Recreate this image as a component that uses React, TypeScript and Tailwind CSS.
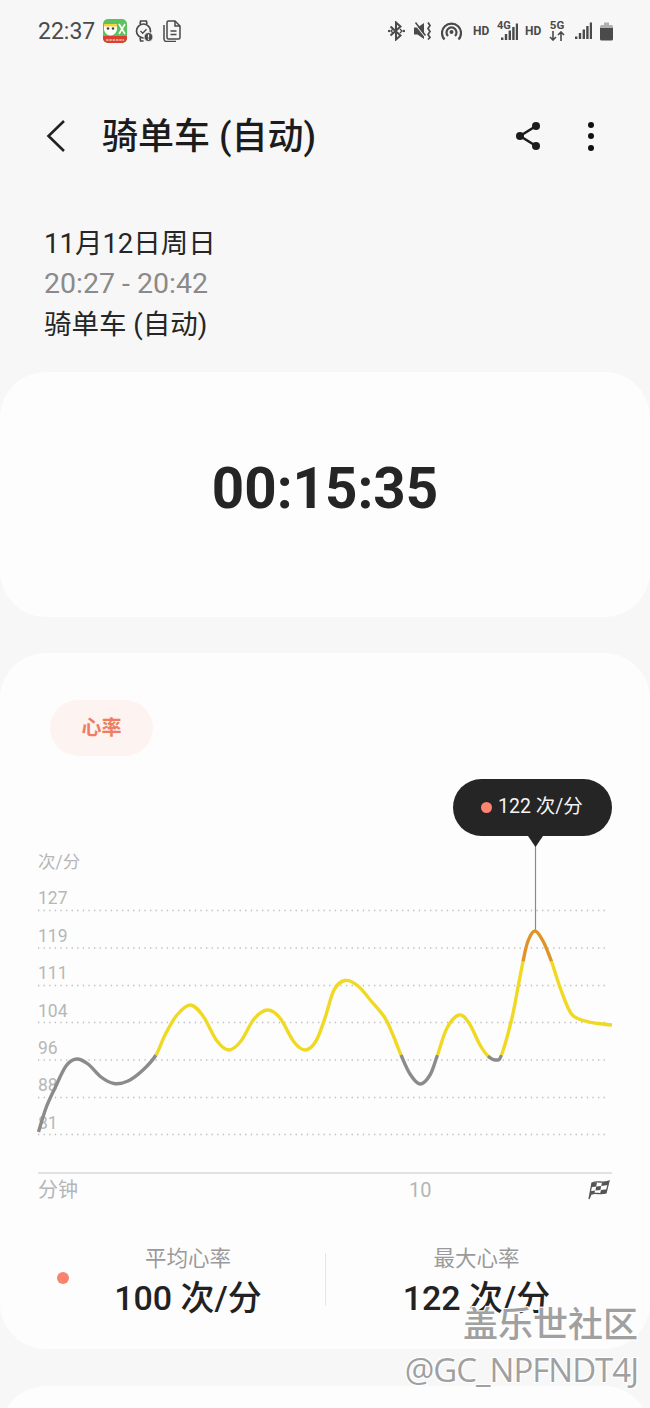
import React from "react";

type P = [number, number];
const pts: P[] = [
  [38.5, 1132], [46, 1108], [55, 1088], [66, 1066], [76.5, 1059], [88, 1064], [101, 1077], [114, 1083.5], [128, 1081], [143, 1070], [156, 1055],
  [165, 1035], [177, 1015], [190.5, 1005], [203, 1016], [217, 1041], [229, 1050], [241, 1041], [254, 1019], [267.5, 1010], [280, 1018], [294, 1042], [305.5, 1050], [316, 1041], [325, 1018],
  [334, 990], [345, 980.5], [358, 986], [372, 1002], [385, 1018], [393, 1035], [401, 1055], [410, 1074], [420, 1084], [430, 1075], [437.5, 1055],
  [447, 1028], [459, 1015], [469, 1023], [480, 1045], [488, 1056], [496, 1060], [501.5, 1055], [511.5, 1020], [517.5, 990], [523, 961.5],
  [528, 941], [535, 931], [543, 941], [551.5, 961.5], [561, 990], [571.5, 1014], [585, 1021], [598, 1023.5], [612, 1025],
];
const catmull = (from: number, to: number) => {
  let d = `M${pts[from][0]} ${pts[from][1]}`;
  for (let i = from; i < to; i++) {
    const p0 = pts[Math.max(i - 1, 0)], p1 = pts[i], p2 = pts[i + 1], p3 = pts[Math.min(i + 2, pts.length - 1)];
    d += ` C${p1[0] + (p2[0] - p0[0]) / 6} ${p1[1] + (p2[1] - p0[1]) / 6} ${p2[0] - (p3[0] - p1[0]) / 6} ${p2[1] - (p3[1] - p1[1]) / 6} ${p2[0]} ${p2[1]}`;
  }
  return d;
};
const segs: [number, number, string][] = [
  [0, 10, "#8b8b8b"], [10, 31, "#f0d922"], [31, 35, "#8b8b8b"], [35, 40, "#f0d922"], [40, 42, "#8b8b8b"], [42, 45, "#f0d922"], [45, 49, "#df9429"], [49, 54, "#f0d922"],
];
const gridY = [910.5, 948, 985.5, 1022.5, 1060, 1097.5, 1134.5];
const labels = ["127", "119", "111", "104", "96", "88", "81"];

const Signal = ({ w = 17 }: { w?: number }) => (
  <svg width={w} height="18" viewBox="0 0 17 18" fill="#4a4a4a">
    <rect x="0" y="14.5" width="2.4" height="2.5" /><rect x="3.800" y="11" width="2.400" height="6" /><rect x="7.600" y="7.500" width="2.400" height="9.500" /><rect x="11.200" y="4" width="2.400" height="13" /><rect x="14.800" y="0.500" width="2.200" height="16.500" />
  </svg>
);

export default function App() {
  return (
    <div className="h-[1408px] w-[650px] overflow-hidden bg-[#f7f7f7] relative font-['Roboto','Noto_Sans_CJK_SC',sans-serif]">
      {/* status bar */}
      <div className="h-[62px] pl-[38px] pr-[37px] flex items-center justify-between">
        <div className="flex items-center">
          <span className="text-[23px] leading-none mt-[1px] text-[#4a4a4a] w-[57px]">22:37</span>
          <svg className="ml-[8px]" width="24" height="24" viewBox="0 0 24 24">
            <rect width="24" height="24" rx="5" fill="#5cc25d" />
            <path d="M0 17h24v2a5 5 0 0 1-5 5H5a5 5 0 0 1-5-5z" fill="#d9402f" />
            <path d="M1 5h13v5a6.500 6.500 0 0 1-13 0z" fill="#fff" />
            <path d="M1 5h13v2.500H1z" fill="#f5d33f" />
            <circle cx="5" cy="9.500" r="1.300" fill="#444" /><circle cx="10" cy="9.500" r="1.300" fill="#444" />
            <path d="M16 5l6 10M22 5l-6 10" stroke="#fff" strokeWidth="1.600" />
            <path d="M3 21h18" stroke="#fff" strokeWidth="1.200" strokeDasharray="2.500 0.800" />
          </svg>
          <svg className="ml-[8px]" width="18" height="24" viewBox="0 0 18 24" fill="none" stroke="#4a4a4a">
            <path d="M5 5l.6-3h5.800l.6 3M5 19l.6 3h3" strokeWidth="1.600" />
            <circle cx="8.500" cy="12" r="7" strokeWidth="1.700" />
            <path d="M5.500 12l2.200 2.200 3.800-4" strokeWidth="1.300" />
            <circle cx="13.500" cy="18" r="4.500" fill="#4a4a4a" stroke="#f7f7f7" />
            <path d="M13.500 15.500v3M13.500 19.500v1.200" stroke="#fff" strokeWidth="1.200" />
          </svg>
          <svg className="ml-[10px]" width="18" height="22" viewBox="0 0 18 22" fill="none" stroke="#4a4a4a" strokeWidth="1.500">
            <path d="M4 2.500A1.500 1.500 0 0 1 5.500 1H12l5 5v11.500a1.500 1.500 0 0 1-1.500 1.500h-10A1.500 1.500 0 0 1 4 17.500z" />
            <path d="M1 5v14a2.500 2.500 0 0 0 2.500 2.500H13" />
            <path d="M12 1v5h5M7.500 11h6M7.500 14.500h6" />
          </svg>
        </div>
        <div className="flex items-center text-[#4a4a4a]">
          <svg width="17" height="20" viewBox="0 0 17 20" fill="none" stroke="#4a4a4a" strokeWidth="2">
            <path d="M2.500 5.500l10 9-4.500 4V1.500l4.500 4-10 9" />
            <circle cx="1" cy="10" r="1.200" fill="#4a4a4a" stroke="none" /><circle cx="16" cy="10" r="1.200" fill="#4a4a4a" stroke="none" />
            <path d="M12 8l2 2-2 2M5 8l-2 2 2 2" strokeWidth="1.400" />
          </svg>
          <svg className="ml-[9px]" width="18" height="20" viewBox="0 0 18 20" fill="#4a4a4a">
            <path d="M0 6.500h3.500L10 2v16l-6.500-4.500H0z" />
            <path d="M0.500 2.500l11 14" stroke="#f7f7f7" strokeWidth="1.200" />
            <path d="M1.500 1.500l10 13" stroke="#4a4a4a" strokeWidth="1.500" />
            <path d="M14 1.500l2 3-2 3 2 3-2 3 2 3-2 2" stroke="#4a4a4a" fill="none" strokeWidth="1.700" />
          </svg>
          <svg className="ml-[9px]" width="21" height="20" viewBox="0 0 21 20" fill="none" stroke="#4a4a4a" strokeWidth="2.200">
            <path d="M3.500 18.500a9.500 9.500 0 1 1 14 0" />
            <path d="M7 15a5 5 0 1 1 7 0" />
            <circle cx="10.500" cy="11" r="2" fill="#4a4a4a" stroke="none" />
          </svg>
          <span className="ml-[11px] w-[15px] text-[12px] font-bold leading-none whitespace-nowrap">HD</span>
          <div className="ml-[9px] w-[21px] h-[20px] relative">
            <span className="absolute left-0 -top-[1px] text-[11px] font-bold leading-none">4G</span>
            <div className="absolute right-0 bottom-0"><Signal w={17} /></div>
          </div>
          <span className="ml-[7px] w-[15px] text-[12px] font-bold leading-none whitespace-nowrap">HD</span>
          <div className="ml-[9px] w-[16px] h-[22px] flex flex-col items-center">
            <span className="text-[11.500px] font-bold leading-[11px]">5G</span>
            <svg width="16" height="10" viewBox="0 0 16 10" fill="none" stroke="#4a4a4a" strokeWidth="1.600">
              <path d="M4 0v9M1 6l3 3 3-3M12 10V1M9 4l3-3 3 3" />
            </svg>
          </div>
          <div className="ml-[10px]"><Signal /></div>
          <svg className="ml-[8px]" width="13" height="20" viewBox="0 0 13 20">
            <path d="M4 1.500h5V4h2.500a1.500 1.500 0 0 1 1.500 1.500V7H0V5.500A1.500 1.500 0 0 1 1.500 4H4z" fill="#b0b0b0" />
            <path d="M0 7h13v11a1.500 1.500 0 0 1-1.500 1.500h-10A1.500 1.500 0 0 1 0 18z" fill="#4a4a4a" />
          </svg>
        </div>
      </div>

      {/* header */}
      <div className="h-[148px] flex items-center">
        <svg className="ml-[46px]" width="20" height="34" viewBox="0 0 20 34" fill="none" stroke="#222" strokeWidth="2.600">
          <path d="M18 2L2.500 17 18 32" />
        </svg>
        <span className="ml-[36px] mt-[1px] text-[36px] leading-none font-medium text-[#1c1c1c] whitespace-nowrap">骑单车 (自动)</span>
        <svg className="ml-auto -mr-[1px]" width="28" height="30" viewBox="0 0 28 30" fill="#1c1c1c" stroke="#1c1c1c">
          <path d="M6 15L22 5M6 15l16 10" strokeWidth="2.600" fill="none" />
          <circle cx="6" cy="15" r="4" stroke="none" /><circle cx="22" cy="5" r="4" stroke="none" /><circle cx="22" cy="25" r="4" stroke="none" />
        </svg>
        <div className="ml-[47px] mr-[56px] flex flex-col gap-[5.500px]">
          <span className="w-[6px] h-[6px] rounded-full bg-[#111]" />
          <span className="w-[6px] h-[6px] rounded-full bg-[#111]" />
          <span className="w-[6px] h-[6px] rounded-full bg-[#111]" />
        </div>
      </div>

      {/* date */}
      <div className="mt-[14px] pl-[44px] text-[27.500px] leading-[40.500px] text-[#262626]">
        <div>11月12日周日</div>
        <div className="text-[#8a8a8a] text-[28.500px] -mt-[1px] mb-[1px]">20:27 - 20:42</div>
        <div>骑单车 (自动)</div>
      </div>

      {/* duration card */}
      <div className="mt-[26px] h-[245px] rounded-[46px] bg-[#fdfdfd] flex items-center justify-center pb-[9px]">
        <span className="text-[56.500px] leading-none font-bold text-[#252525]">00:15:35</span>
      </div>

      {/* heart rate card */}
      <div className="mt-[36px] h-[696px] rounded-[46px] bg-[#fdfdfd] relative">
        <div className="pt-[47px] pl-[50px]">
          <div className="w-[103px] h-[56px] rounded-full bg-[#fdf3f0] flex items-center justify-center text-[20px] font-bold pt-[1px] text-[#ee7d66]">心率</div>
        </div>

        <div className="relative h-[418px] pt-[94px] pl-[38px] text-[#b7b7b7] text-[17.500px] leading-none">
          <div className="h-[31px] pt-[4px]">次/分</div>
          {labels.map((l) => (
            <div key={l} className="h-[37.400px] flex items-center">{l}</div>
          ))}
          <svg className="absolute left-0 top-0" width="650" height="418" viewBox="0 756 650 418" fill="none">
            {gridY.map((y) => (
              <line key={y} x1="38" x2="609" y1={y} y2={y} stroke="#bdbdbd" strokeWidth="1.300" strokeDasharray="1.300 4.300" />
            ))}
            <line x1="535.500" x2="535.500" y1="840" y2="931" stroke="#8a8a8a" strokeWidth="1.200" />
            {segs.map(([a, b, c]) => (
              <path key={a} d={catmull(a, b)} stroke={c} strokeWidth="3.400" />
            ))}
            <line x1="38" x2="612" y1="1173" y2="1173" stroke="#d9d9d9" strokeWidth="1.500" />
          </svg>
          <div className="absolute left-[453px] top-[23px] w-[159px] h-[57px] rounded-[29px] bg-[#252525] flex items-center pl-[28px] text-white">
            <span className="w-[11px] h-[11px] rounded-full bg-[#fb8570]" />
            <span className="ml-[6px] text-[19.500px] whitespace-nowrap text-[#f4f4f4]">122 次/分</span>
            <svg className="absolute left-[75px] top-[57px]" width="15" height="11" viewBox="0 0 15 11" fill="#252525">
              <path d="M0 0h15L7.500 11z" />
            </svg>
          </div>
        </div>

        {/* x axis */}
        <div className="mt-[1px] h-[30px] pl-[38px] pr-[40px] flex items-center text-[20px] text-[#b5b5b5]">
          <span className="w-[40px]">分钟</span>
          <span className="ml-[331px]">10</span>
          <svg className="ml-auto" width="22" height="20" viewBox="0 0 22 20">
            <path d="M1 19L4 3c6-3 10 1 17-2l-3 12c-6 2-10-1-15 1z" fill="#fff" stroke="#555" strokeWidth="1.300" />
            <path d="M4 3l5-.5-.8 4-4.900.8zM14 2.500l7-1.500-.8 4-7 1zM8.200 6.500l5-.5-.8 4-5 .5z" fill="#555" />
            <path d="M13 10l6-.8-1 3.800-6 .8zM7 10.500l-4.500.8-.6 3.200 4.500-.5z" fill="#555" />
          </svg>
        </div>

        {/* stats */}
        <div className="mt-[40px] pl-[57px] pr-[23px] flex items-center">
          <span className="w-[12px] h-[12px] rounded-full bg-[#f8846e] shrink-0 -mt-[10px]" />
          <div className="w-[238px] flex flex-col items-center">
            <span className="text-[21.500px] leading-[28px] text-[#9a9a9a]">平均心率</span>
            <span className="mt-[2px] mb-[1px] text-[34px] leading-[46px] font-medium text-[#222]">100 次/分</span>
          </div>
          <div className="ml-[18px] w-px h-[53px] bg-[#e6e6e6] -mt-[8px]" />
          <div className="flex-1 flex flex-col items-center">
            <span className="text-[21.500px] leading-[28px] text-[#9a9a9a]">最大心率</span>
            <span className="mt-[2px] mb-[1px] text-[34px] leading-[46px] font-medium text-[#222]">122 次/分</span>
          </div>
        </div>
      </div>

      {/* next card */}
      <div className="mt-[37px] h-[120px] rounded-[46px] bg-[#fdfdfd]" />

      {/* watermark */}
      <div className="absolute right-[12px] top-[1307px] flex flex-col items-end text-[#a0a0a0] [text-shadow:1px_1px_0_#fff,-1px_-1px_0_#fff,1px_-1px_0_#fff,-1px_1px_0_#fff]">
        <span className="text-[35px] leading-[37px] whitespace-nowrap font-medium">盖乐世社区</span>
        <span className="mt-[7px] text-[33px] leading-[38px] whitespace-nowrap font-['Open_Sans',sans-serif] tracking-[-1px]">@GC_NPFNDT4J</span>
      </div>
    </div>
  );
}
